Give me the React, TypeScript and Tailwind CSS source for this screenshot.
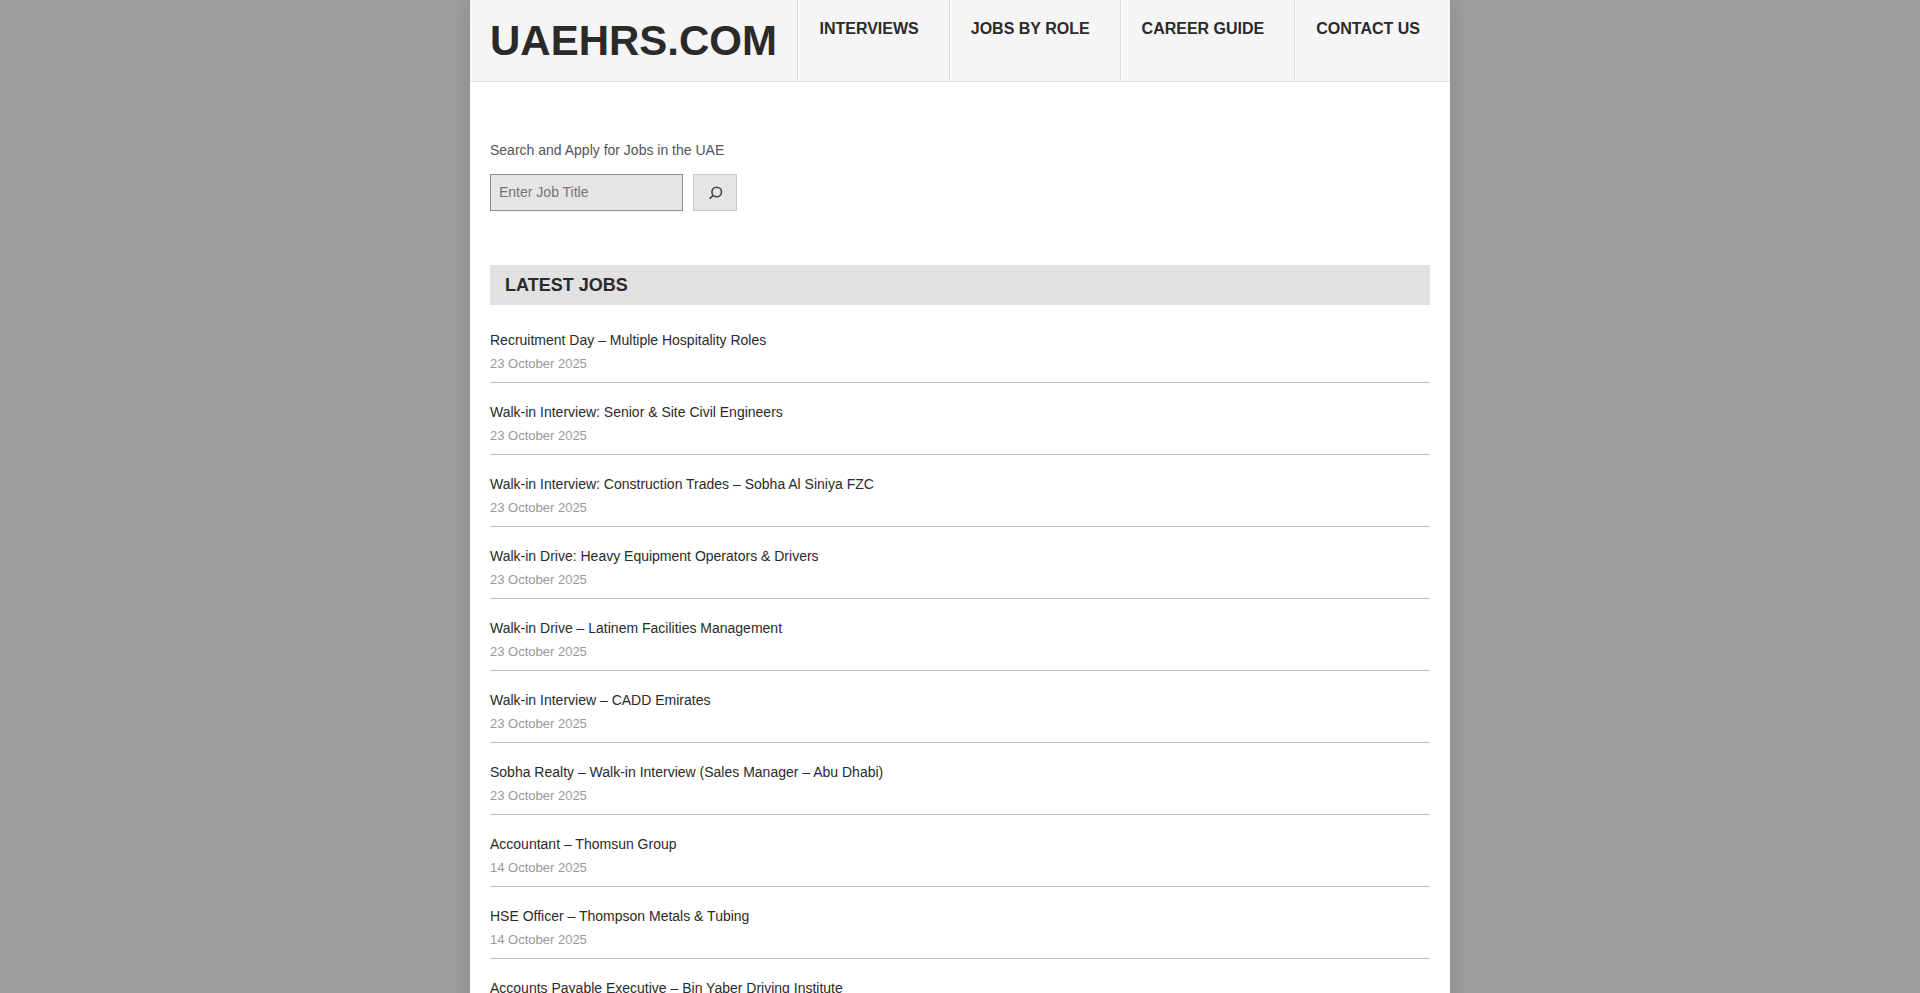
import { useState } from "react";

const menu = ["Interviews", "Jobs by Role", "Career Guide", "Contact Us"];

const jobs = [
  { title: "Recruitment Day – Multiple Hospitality Roles", date: "23 October 2025" },
  { title: "Walk-in Interview: Senior & Site Civil Engineers", date: "23 October 2025" },
  { title: "Walk-in Interview: Construction Trades – Sobha Al Siniya FZC", date: "23 October 2025" },
  { title: "Walk-in Drive: Heavy Equipment Operators & Drivers", date: "23 October 2025" },
  { title: "Walk-in Drive – Latinem Facilities Management", date: "23 October 2025" },
  { title: "Walk-in Interview – CADD Emirates", date: "23 October 2025" },
  { title: "Sobha Realty – Walk-in Interview (Sales Manager – Abu Dhabi)", date: "23 October 2025" },
  { title: "Accountant – Thomsun Group", date: "14 October 2025" },
  { title: "HSE Officer – Thompson Metals & Tubing", date: "14 October 2025" },
  { title: "Accounts Payable Executive – Bin Yaber Driving Institute", date: "14 October 2025" },
];

function Header() {
  return (
    <header className="flex flex-wrap justify-between border-b border-[#dddddd] bg-[#f5f5f5]">
      <h1 className="py-4 pl-5 text-[42px] leading-[49px] font-bold">
        <a href="/">UAEHRS.COM</a>
      </h1>
      <nav className="flex">
        {menu.map((item) => (
          <a
            key={item}
            href="#"
            className="border-l border-[#dddddd] pt-4 pr-[30px] pl-[21px] leading-[26px] font-bold uppercase shadow-[inset_1px_0_0_#ffffff]"
          >
            {item}
          </a>
        ))}
      </nav>
    </header>
  );
}

function SearchForm() {
  const [keyword, setKeyword] = useState("");

  return (
    <form onSubmit={(e) => e.preventDefault()} className="text-sm text-[#555555]">
      <label htmlFor="keyword" className="block leading-6">
        Search and Apply for Jobs in the UAE
      </label>
      <div className="mt-3 flex gap-[10px]">
        <input
          id="keyword"
          type="search"
          placeholder="Enter Job Title"
          value={keyword}
          onChange={(e) => setKeyword(e.target.value)}
          className="h-[37px] w-[193px] border border-[#8c8c8c] bg-[#e7e4e5] px-2 pb-[2px] placeholder:text-[#757575] focus:outline-none"
        />
        <button
          type="submit"
          aria-label="Search"
          className="flex h-[37px] w-11 items-center justify-center border border-[#c8c8c8] bg-[#e7e4e5] text-[#444444]"
        >
          <svg viewBox="0 0 24 24" className="h-6 w-6" fill="none" stroke="currentColor" strokeWidth="1.6">
            <circle cx="13.7" cy="11" r="4.8" />
            <path d="M10.3 14.300 6.600 17.700" />
          </svg>
        </button>
      </div>
    </form>
  );
}

export default function App() {
  return (
    <div className="min-h-screen bg-[#9d9d9d] font-['Liberation_Sans',Arial,sans-serif] text-[#2a2a2a]">
      <div className="mx-auto min-h-screen max-w-[980px] bg-white shadow-[0_0_20px_rgba(0,0,0,0.15)]">
        <Header />
        <main className="px-5 pt-14">
          <SearchForm />
          <section className="mt-[54px]">
            <h2 className="mb-[6px] bg-[#e1e1e1] px-[15px] text-lg leading-10 font-bold uppercase">Latest Jobs</h2>
            <ul>
              {jobs.map((job) => (
                <li key={job.title} className="border-b border-[#c4c4c4] pt-[17px] pb-[6px]">
                  <a href="#" className="block text-sm leading-6 hover:underline">
                    {job.title}
                  </a>
                  <time className="block text-[13px] leading-6 text-[#999999]">{job.date}</time>
                </li>
              ))}
            </ul>
          </section>
        </main>
      </div>
    </div>
  );
}
